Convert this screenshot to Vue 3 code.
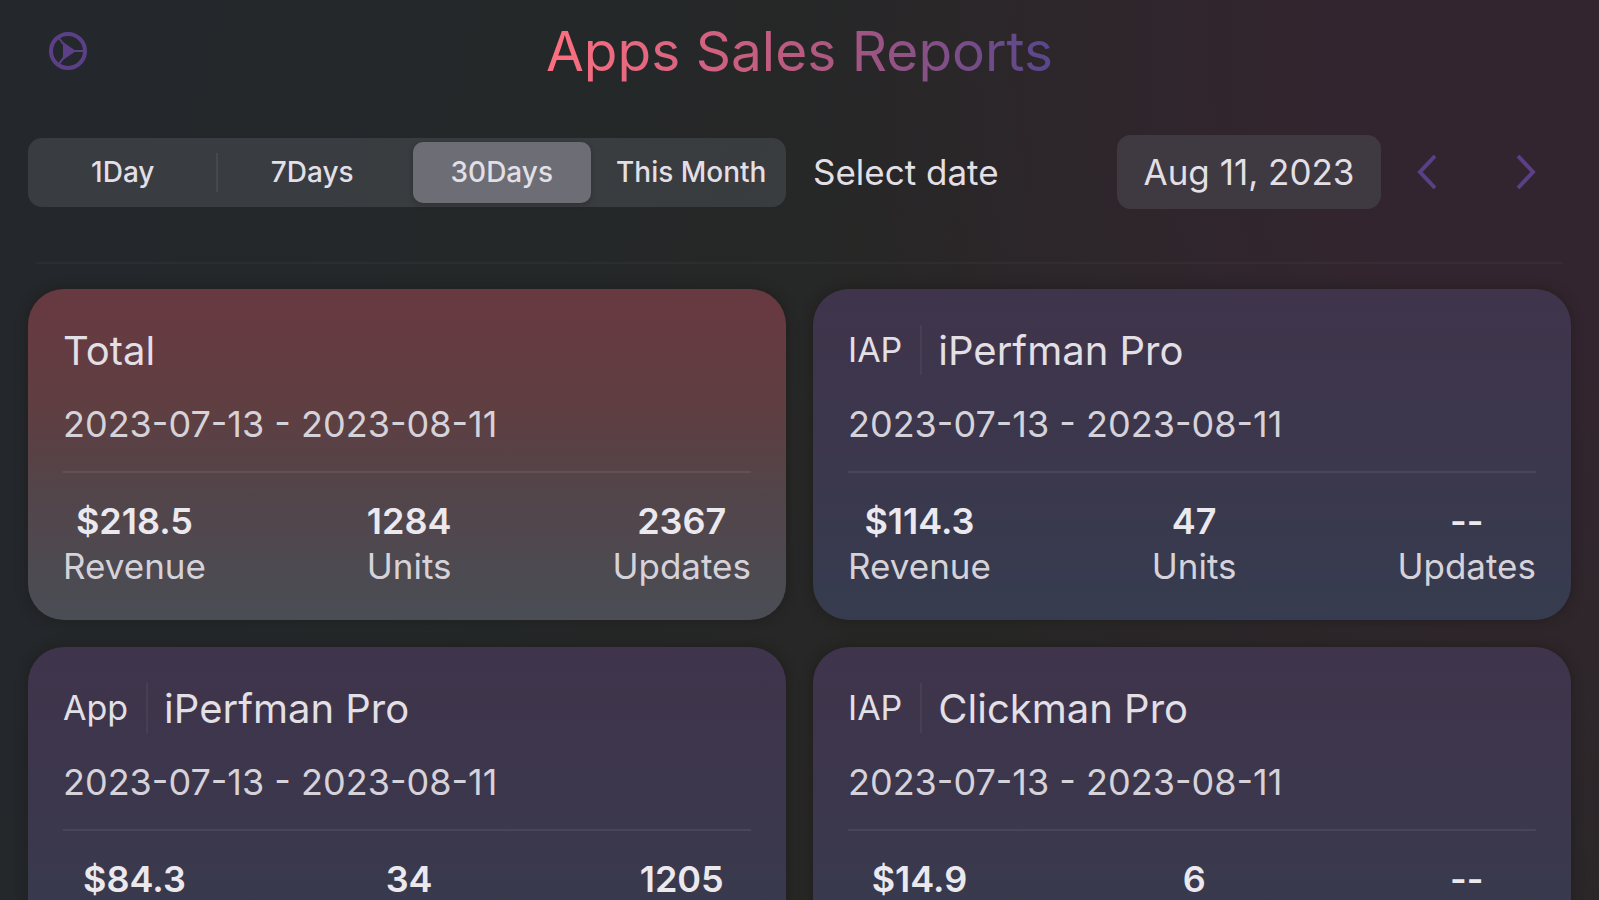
<script setup>
import { ref } from 'vue'

const ranges = ['1Day', '7Days', '30Days', 'This Month']
const activeRange = ref('30Days')
const selectedDate = ref('Aug 11, 2023')
const period = '2023-07-13 - 2023-08-11'

const reports = ref([
    { id: 1, type: '', name: 'Total', revenue: '$218.5', units: '1284', updates: '2367' },
    { id: 2, type: 'IAP', name: 'iPerfman Pro', revenue: '$114.3', units: '47', updates: '--' },
    { id: 3, type: 'App', name: 'iPerfman Pro', revenue: '$84.3', units: '34', updates: '1205' },
    { id: 4, type: 'IAP', name: 'Clickman Pro', revenue: '$14.9', units: '6', updates: '--' },
])

const moveDate = (days) => {
    const d = new Date(selectedDate.value)
    if (isNaN(d)) return
    d.setDate(d.getDate() + days)
    selectedDate.value = d.toLocaleDateString('en-US', { month: 'short', day: 'numeric', year: 'numeric' })
}
</script>

<template>
    <main class="page">
        <header class="header">
            <button class="iconBtn settings" type="button" aria-label="Settings">
                <svg width="40" height="40" viewBox="0 0 40 40" fill="none" stroke="currentColor">
                    <circle cx="20" cy="20" r="17" stroke-width="4" />
                    <path d="M11 7 L16 14 M11 33 L16 26 M24 20 H36" stroke-width="2" />
                    <path d="M15 11 V29 L28 20 Z" fill="currentColor" stroke="none" />
                </svg>
            </button>
            <h1 class="title">Apps Sales Reports</h1>
        </header>

        <section class="toolbar">
            <div class="segments" role="group">
                <button v-for="range in ranges" :key="range" type="button" class="segment"
                    :class="{ active: range === activeRange }" @click="activeRange = range">
                    {{ range }}
                </button>
            </div>
            <div class="datePicker">
                <label class="dateLabel" for="reportDate">Select date</label>
                <input id="reportDate" v-model="selectedDate" class="dateInput" type="text">
                <button class="iconBtn arrow" type="button" aria-label="Previous" @click="moveDate(-1)">
                    <svg width="20" height="36" viewBox="0 0 20 36" fill="none" stroke="currentColor" stroke-width="4">
                        <path d="M18 2 L3 18 L18 34" />
                    </svg>
                </button>
                <button class="iconBtn arrow" type="button" aria-label="Next" @click="moveDate(1)">
                    <svg width="20" height="36" viewBox="0 0 20 36" fill="none" stroke="currentColor" stroke-width="4">
                        <path d="M2 2 L17 18 L2 34" />
                    </svg>
                </button>
            </div>
        </section>

        <hr class="divider">

        <section class="cards">
            <article v-for="report in reports" :key="report.id" class="card" :class="{ total: !report.type }">
                <div class="cardHead">
                    <span v-if="report.type" class="cardType">{{ report.type }}</span>
                    <h2 class="cardName">{{ report.name }}</h2>
                </div>
                <p class="period">{{ period }}</p>
                <div class="stats">
                    <div class="stat"><strong>{{ report.revenue }}</strong><span>Revenue</span></div>
                    <div class="stat"><strong>{{ report.units }}</strong><span>Units</span></div>
                    <div class="stat"><strong>{{ report.updates }}</strong><span>Updates</span></div>
                </div>
            </article>
        </section>
    </main>
</template>

<style>
html {
    scrollbar-width: none;
    background: #242829;
}
</style>

<style scoped>
.page {
    box-sizing: border-box;
    min-height: 100vh;
    padding: 0 28px 28px;
    background:
        radial-gradient(ellipse 50% 90% at 100% 5%, #33252f 0%, #33252f 35%, #33252f00 100%),
        linear-gradient(105deg, #24272c 0%, #242829 30%, #272726 55%, #2a2727 100%);
    color: #e2dfe5;
    font-family: Inter, "Liberation Sans", sans-serif;
}

button,
input {
    font-family: inherit;
    color: inherit;
    border: 0;
    padding: 0;
}

.header {
    display: grid;
    grid-template-columns: 80px 1fr 80px;
    align-items: center;
    height: 102px;
}

.title {
    justify-self: center;
    margin: 0;
    font-size: 55px;
    font-weight: 400;
    line-height: 72px;
    background: linear-gradient(90deg, #ff6f80, #b85a80 50%, #56478c);
    background-clip: text;
    color: transparent;
}

.iconBtn {
    display: flex;
    align-items: center;
    justify-content: center;
    background: none;
    color: #5b4088;
    cursor: pointer;
}

.toolbar {
    display: grid;
    grid-template-columns: 1fr 1fr;
    gap: 27px;
    align-items: center;
    height: 140px;
}

.segments {
    display: flex;
    height: 69px;
    border-radius: 14px;
    background: rgba(118, 122, 130, 0.25);
}

.segment {
    position: relative;
    flex: 1;
    margin: 4px 6px;
    border-radius: 10px;
    background: none;
    font-size: 28px;
    font-weight: 500;
    white-space: nowrap;
    cursor: pointer;
}

.segment.active {
    background: #6c6d75;
    box-shadow: 0 2px 6px rgba(0, 0, 0, 0.2);
}

.segment:first-child::after {
    content: "";
    position: absolute;
    top: 11px;
    bottom: 11px;
    right: -6px;
    width: 2px;
    background: #45484d;
}

.datePicker {
    display: flex;
    align-items: center;
}

.dateLabel {
    flex: 1;
    font-size: 35px;
}

.dateInput {
    width: 264px;
    height: 74px;
    border-radius: 14px;
    background: #3f3a41;
    font-size: 35px;
    text-align: center;
}

.arrow {
    width: 91px;
    height: 60px;
}

.arrow + .arrow {
    margin-left: 8px;
}

.divider {
    height: 2px;
    margin: 20px 8px 25px;
    border: 0;
    background: rgba(255, 255, 255, 0.03);
}

.cards {
    display: grid;
    grid-template-columns: 1fr 1fr;
    gap: 27px;
}

.card {
    padding: 36px 35px 31px;
    border-radius: 36px;
    background: linear-gradient(#3f344b, #3c374d 50%, #363c4f);
    box-shadow: 0 0 12px rgba(28, 26, 24, 0.7);
}

.card.total {
    background: linear-gradient(#683940, #5f3e41 35%, #52454a 62%, #4a4d55);
}

.cardHead {
    display: flex;
    align-items: center;
    height: 50px;
}

.cardType {
    margin-right: 16px;
    padding-right: 18px;
    border-right: 2px solid rgba(255, 255, 255, 0.05);
    font-size: 34px;
    line-height: 50px;
}

.cardName {
    margin: 0;
    font-size: 40px;
    font-weight: 400;
}

.period {
    margin: 29px 0 27px;
    font-size: 36px;
    line-height: 40px;
    color: #d6d2d9;
}

.stats {
    display: flex;
    justify-content: space-between;
    padding-top: 26px;
    border-top: 2px solid rgba(255, 255, 255, 0.07);
}

.stat {
    display: flex;
    flex-direction: column;
    align-items: center;
    font-size: 35px;
    line-height: 45px;
    color: #d6d2d9;
}

.stat strong {
    font-size: 36px;
    font-weight: 600;
    color: #ece9ee;
}
</style>
